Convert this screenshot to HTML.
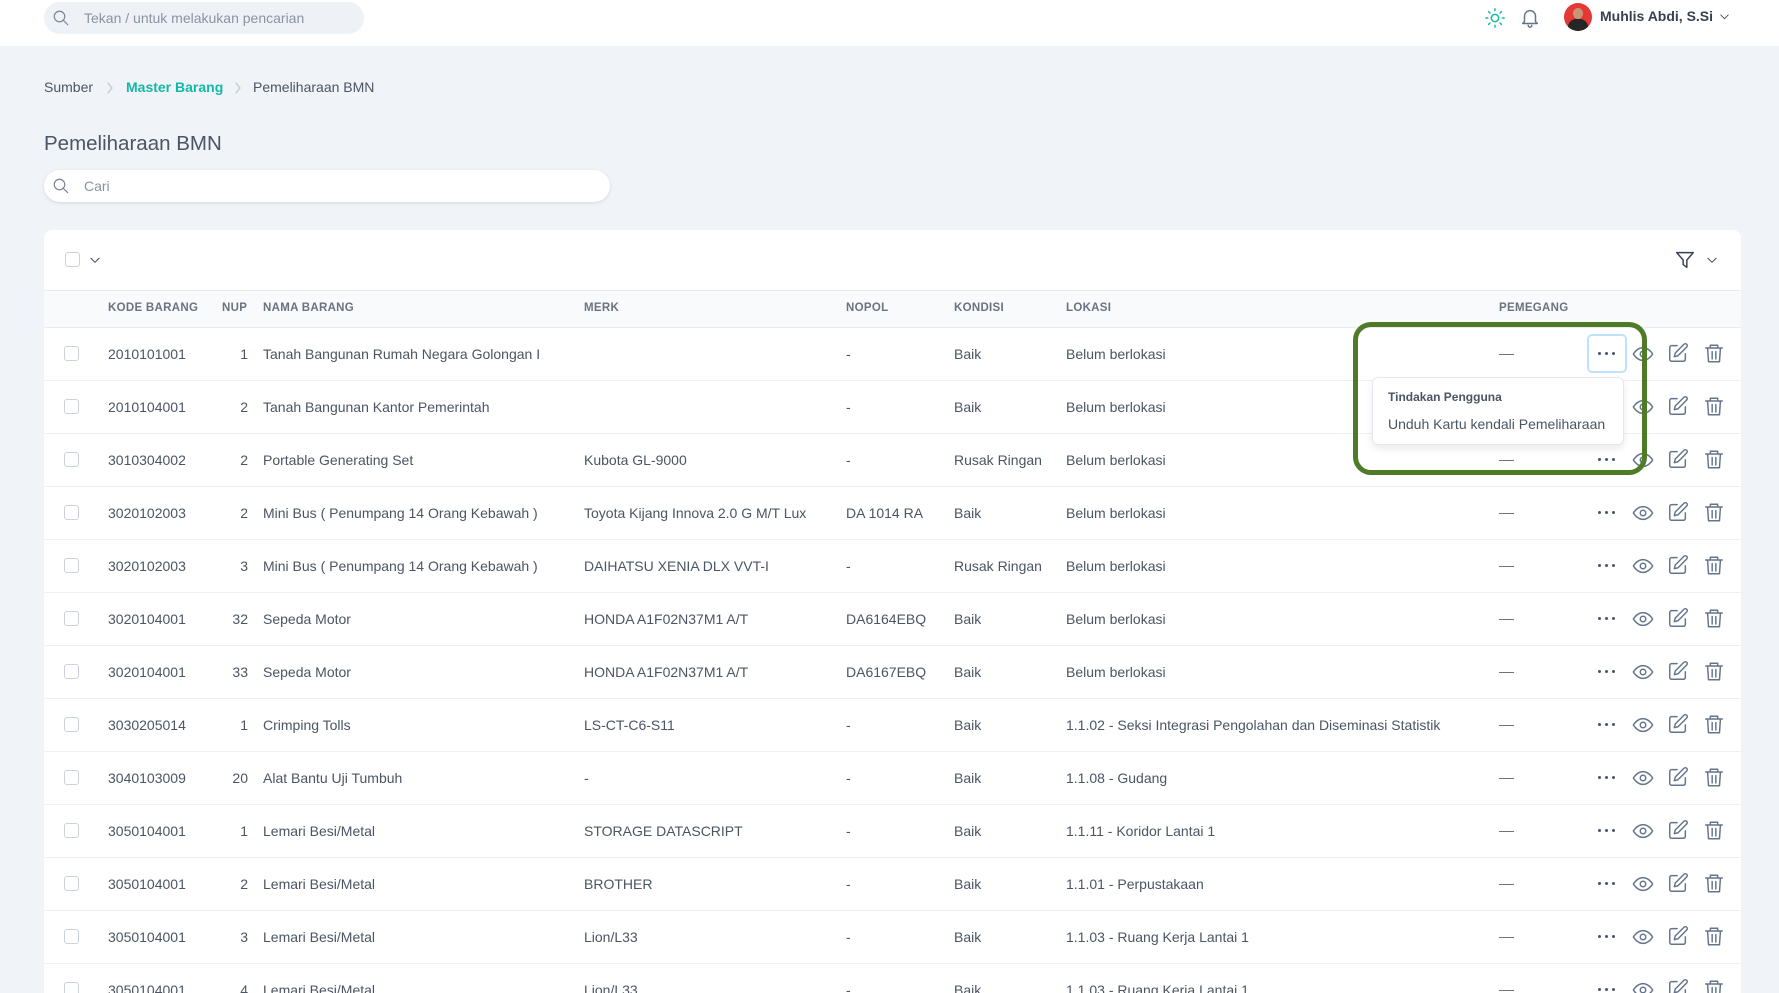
<!DOCTYPE html>
<html><head><meta charset="utf-8">
<style>
*{box-sizing:border-box;margin:0;padding:0}
html{overflow:hidden;width:1779px;height:993px}
body{width:1779px;height:993px;overflow:hidden;background:#f0f3f8;font-family:"Liberation Sans",sans-serif;color:#4b5563;position:relative}
.a{position:absolute;white-space:nowrap}
.hdr{position:absolute;left:0;top:0;width:1779px;height:46px;background:#fff}
.cb{position:absolute;width:15px;height:15px;border:1px solid #cbd2da;border-radius:3px;background:#fff}
.card{position:absolute;left:44px;top:230px;width:1697px;height:763px;background:#fff;border-radius:8px 8px 0 0}
.th{position:absolute;top:290px;left:44px;width:1697px;height:38px;background:#f8fafc;border-top:1px solid #e8ecf1;border-bottom:1px solid #e8ecf1}
.t{font-size:11.5px;font-weight:bold;color:#6b7280;letter-spacing:.3px;top:302px}
.row{position:absolute;left:44px;width:1697px;height:53px;border-bottom:1px solid #edf0f4}
.c{font-size:14px;color:#4b5563}
.dots{position:absolute;width:20px;height:4px}
.dots i{position:absolute;top:0;width:3.4px;height:3.4px;border-radius:50%;background:#475569}
svg.i{position:absolute;fill:none;stroke:#64748b;stroke-width:1.6;stroke-linecap:round;stroke-linejoin:round}
</style></head><body>
<div class="hdr"></div>
<div class="a" style="left:44px;top:2px;width:320px;height:32px;border-radius:16px;background:#eef1f6"></div>
<svg class="i" style="left:52px;top:9px;stroke:#7b8494" width="18" height="18" viewBox="0 0 24 24"><circle cx="10" cy="10" r="7"/><path d="M15 15l6 6"/></svg>
<div class="a" style="left:84px;top:10px;font-size:14px;color:#8a93a3">Tekan / untuk melakukan pencarian</div>
<svg class="i" style="left:1484px;top:7px;stroke:#14b8a6" width="22" height="22" viewBox="0 0 24 24"><circle cx="12" cy="12" r="4"/><path d="M12 2v2M12 20v2M2 12h2M20 12h2M5 5l1.5 1.5M17.5 17.5L19 19M5 19l1.5-1.5M17.5 6.5L19 5"/></svg>
<svg class="i" style="left:1519px;top:6px" width="22" height="24" viewBox="0 0 24 24"><path d="M6 16V10a6 6 0 0112 0v6l2 2H4zM10 20a2 2 0 004 0"/></svg>
<div class="a" style="left:1564px;top:3px;width:28px;height:28px;border-radius:50%;overflow:hidden;background:#e53935">
<div class="a" style="left:9px;top:5px;width:10px;height:11px;border-radius:50%;background:#c99575"></div>
<div class="a" style="left:4px;top:16px;width:20px;height:16px;border-radius:8px 8px 0 0;background:#262626"></div></div>
<div class="a" style="left:1600px;top:8px;font-size:14px;font-weight:bold;color:#374151">Muhlis Abdi, S.Si</div>
<svg class="i" style="left:1718px;top:10px;stroke:#374151" width="13" height="13" viewBox="0 0 24 24"><path d="M5 9l7 7 7-7"/></svg>

<div class="a" style="left:44px;top:79px;font-size:14px;color:#4b5563">Sumber</div>
<svg class="i" style="left:105px;top:82px;stroke:#c4c9d1;stroke-width:1.4" width="10" height="12" viewBox="0 0 10 12"><path d="M3 1l4 5-4 5"/></svg>
<div class="a" style="left:126px;top:79px;font-size:14px;color:#14b8a6;font-weight:bold">Master Barang</div>
<svg class="i" style="left:233px;top:82px;stroke:#c4c9d1;stroke-width:1.4" width="10" height="12" viewBox="0 0 10 12"><path d="M3 1l4 5-4 5"/></svg>
<div class="a" style="left:253px;top:79px;font-size:14px;color:#4b5563">Pemeliharaan BMN</div>
<div class="a" style="left:44px;top:132px;font-size:20.5px;color:#4b5563">Pemeliharaan BMN</div>
<div class="a" style="left:44px;top:170px;width:566px;height:32px;border-radius:16px;background:#fff;box-shadow:0 1px 3px rgba(0,0,0,.12)"></div>
<svg class="i" style="left:52px;top:177px;stroke:#7b8494" width="18" height="18" viewBox="0 0 24 24"><circle cx="10" cy="10" r="7"/><path d="M15 15l6 6"/></svg>
<div class="a" style="left:84px;top:178px;font-size:14px;color:#8a93a3">Cari</div>

<div class="card"></div>
<div class="cb" style="left:65px;top:252px"></div>
<svg class="i" style="left:88px;top:253px;stroke:#374151" width="14" height="14" viewBox="0 0 24 24"><path d="M5 9l7 7 7-7"/></svg>
<svg class="i" style="left:1674px;top:249px;stroke:#374151" width="22" height="22" viewBox="0 0 24 24"><path d="M3 4h18l-7 8v8l-4-3v-5z"/></svg>
<svg class="i" style="left:1705px;top:253px;stroke:#374151" width="14" height="14" viewBox="0 0 24 24"><path d="M5 9l7 7 7-7"/></svg>

<div class="th"></div>
<div class="a t" style="left:108px">KODE BARANG</div>
<div class="a t" style="left:222px">NUP</div>
<div class="a t" style="left:263px">NAMA BARANG</div>
<div class="a t" style="left:584px">MERK</div>
<div class="a t" style="left:846px">NOPOL</div>
<div class="a t" style="left:954px">KONDISI</div>
<div class="a t" style="left:1066px">LOKASI</div>
<div class="a t" style="left:1499px">PEMEGANG</div>

<div style="position:absolute;left:0;top:0">
<div class="row" style="top:328px"></div><div class="row" style="top:381px"></div><div class="row" style="top:434px"></div><div class="row" style="top:487px"></div><div class="row" style="top:540px"></div><div class="row" style="top:593px"></div><div class="row" style="top:646px"></div><div class="row" style="top:699px"></div><div class="row" style="top:752px"></div><div class="row" style="top:805px"></div><div class="row" style="top:858px"></div><div class="row" style="top:911px"></div><div class="row" style="top:964px"></div>
</div>
<div id="cells"></div>
<script>
var d=[["2010101001","1","Tanah Bangunan Rumah Negara Golongan I","","-","Baik","Belum berlokasi"],
["2010104001","2","Tanah Bangunan Kantor Pemerintah","","-","Baik","Belum berlokasi"],
["3010304002","2","Portable Generating Set","Kubota GL-9000","-","Rusak Ringan","Belum berlokasi"],
["3020102003","2","Mini Bus ( Penumpang 14 Orang Kebawah )","Toyota Kijang Innova 2.0 G M/T Lux","DA 1014 RA","Baik","Belum berlokasi"],
["3020102003","3","Mini Bus ( Penumpang 14 Orang Kebawah )","DAIHATSU XENIA DLX VVT-I","-","Rusak Ringan","Belum berlokasi"],
["3020104001","32","Sepeda Motor","HONDA A1F02N37M1 A/T","DA6164EBQ","Baik","Belum berlokasi"],
["3020104001","33","Sepeda Motor","HONDA A1F02N37M1 A/T","DA6167EBQ","Baik","Belum berlokasi"],
["3030205014","1","Crimping Tolls","LS-CT-C6-S11","-","Baik","1.1.02 - Seksi Integrasi Pengolahan dan Diseminasi Statistik"],
["3040103009","20","Alat Bantu Uji Tumbuh","-","-","Baik","1.1.08 - Gudang"],
["3050104001","1","Lemari Besi/Metal","STORAGE DATASCRIPT","-","Baik","1.1.11 - Koridor Lantai 1"],
["3050104001","2","Lemari Besi/Metal","BROTHER","-","Baik","1.1.01 - Perpustakaan"],
["3050104001","3","Lemari Besi/Metal","Lion/L33","-","Baik","1.1.03 - Ruang Kerja Lantai 1"],
["3050104001","4","Lemari Besi/Metal","Lion/L33","-","Baik","1.1.03 - Ruang Kerja Lantai 1"]];
var h="";
d.forEach(function(r,i){var y=354+i*53,ty=y-8;
h+='<div class="cb" style="left:64px;top:'+(y-8)+'px"></div>';
h+='<div class="a c" style="left:108px;top:'+ty+'px">'+r[0]+'</div>';
h+='<div class="a c" style="left:200px;width:48px;text-align:right;top:'+ty+'px">'+r[1]+'</div>';
h+='<div class="a c" style="left:263px;top:'+ty+'px">'+r[2]+'</div>';
h+='<div class="a c" style="left:584px;top:'+ty+'px">'+r[3]+'</div>';
h+='<div class="a c" style="left:846px;top:'+ty+'px">'+r[4]+'</div>';
h+='<div class="a c" style="left:954px;top:'+ty+'px">'+r[5]+'</div>';
h+='<div class="a c" style="left:1066px;top:'+ty+'px">'+r[6]+'</div>';
if(i!=1){h+='<div class="a" style="left:1499px;top:'+y+'px;width:15px;height:1px;background:#6b7280"></div>';
if(i!=0)h+='<div class="dots" style="left:1598px;top:'+(y-2)+'px"><i style="left:0"></i><i style="left:7px"></i><i style="left:14px"></i></div>';}
h+='<svg class="i" style="left:1632px;top:'+(y-11)+'px" width="22" height="22" viewBox="0 0 24 24"><path d="M1.5 12S5.5 5 12 5s10.5 7 10.5 7-4 7-10.5 7S1.5 12 1.5 12z"/><circle cx="12" cy="12" r="3"/></svg>';
h+='<svg class="i" style="left:1667px;top:'+(y-12)+'px" width="22" height="22" viewBox="0 0 24 24"><path d="M11 4H5a2 2 0 00-2 2v13a2 2 0 002 2h13a2 2 0 002-2v-6"/><path d="M18.5 2.5a2.1 2.1 0 013 3L12 15l-4 1 1-4z"/></svg>';
h+='<svg class="i" style="left:1703px;top:'+(y-12)+'px" width="22" height="23" viewBox="0 0 24 24"><path d="M3 6h18M8 6V3h8v3M5 6l1 15h12l1-15M10 10v8M14 10v8"/></svg>';
});
document.getElementById("cells").innerHTML=h;
</script>
<div class="a" style="left:1587px;top:334px;width:40px;height:39px;border:2px solid #bde3fb;border-radius:5px;background:#fff"></div>
<div class="dots" style="left:1598px;top:352px"><i style="left:0"></i><i style="left:7px"></i><i style="left:14px"></i></div>
<div class="a" style="left:1372px;top:377px;width:252px;height:68px;background:#fff;border:1px solid #e5e9ef;border-radius:6px;box-shadow:0 4px 8px rgba(0,0,0,.08)"></div>
<div class="a" style="left:1388px;top:390px;font-size:12px;font-weight:bold;color:#4b5563">Tindakan Pengguna</div>
<div class="a" style="left:1388px;top:416px;font-size:14px;color:#4b5563">Unduh Kartu kendali Pemeliharaan</div>
<div class="a" style="left:1353px;top:322px;width:294px;height:153px;border:5px solid #4f7a28;border-radius:18px"></div>
</body></html>
